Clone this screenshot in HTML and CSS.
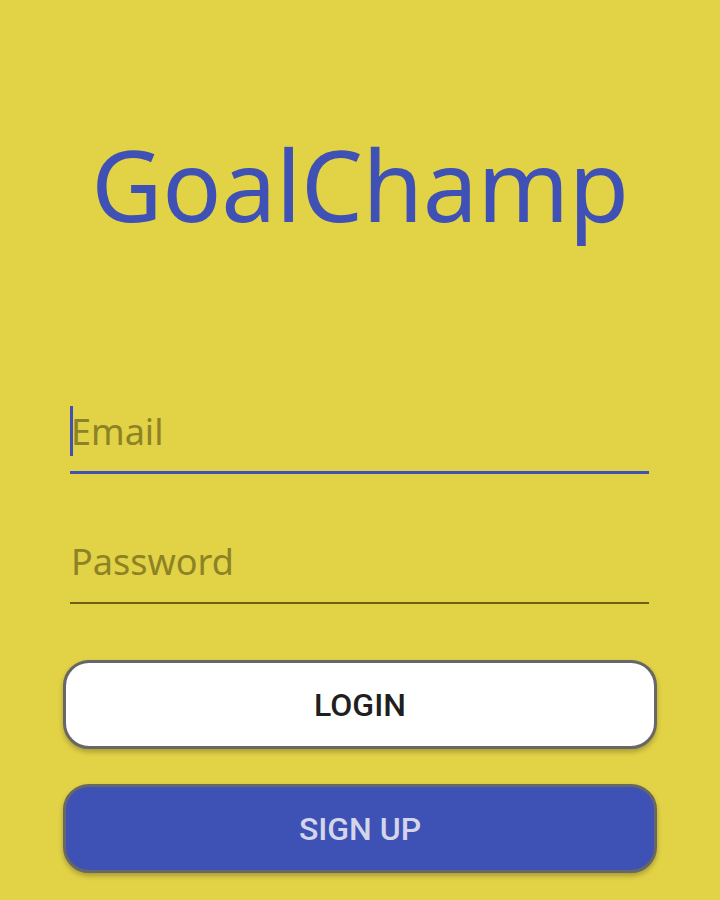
FILE: index.html
```html
<!DOCTYPE html>
<html>
<head>
<meta charset="utf-8">
<link rel="stylesheet" href="styles.css">
</head>
<body>
<main class="screen">
  <h1 class="title">GoalChamp</h1>
  <form class="form">
    <div class="field field-active">
      <span class="cursor"></span>
      <span class="placeholder">Email</span>
    </div>
    <div class="field">
      <span class="placeholder">Password</span>
    </div>
    <button type="button" class="btn btn-login">LOGIN</button>
    <button type="button" class="btn btn-signup">SIGN UP</button>
  </form>
</main>
</body>
</html>
```

FILE: styles.css
```css
html, body {
  margin: 0;
  padding: 0;
  background: #e2d246;
}
.screen {
  width: 720px;
  height: 900px;
  box-sizing: border-box;
  padding: 0 63px;
  display: flex;
  flex-direction: column;
  overflow: hidden;
}
.title {
  margin: 124px 0 0;
  font-family: "Noto Sans", sans-serif;
  font-weight: 400;
  font-size: 98px;
  line-height: 120px;
  color: #3f51b5;
  text-align: center;
  letter-spacing: -0.3px;
}
.form {
  display: flex;
  flex-direction: column;
  margin-top: 162px;
}
.field {
  margin: 0 8px 0 7px;
  height: 68px;
  padding-top: 6px;
  display: flex;
  align-items: flex-start;
  border-bottom: 2px solid #6e5f14;
  position: relative;
  box-sizing: border-box;
}
.field + .field {
  margin-top: 62px;
}
.field-active {
  border-bottom: 3px solid #3f51b5;
}
.cursor {
  position: absolute;
  left: 0;
  top: 0;
  width: 3px;
  height: 50px;
  background: #3f51b5;
}
.placeholder {
  font-family: "Noto Sans", sans-serif;
  font-size: 36px;
  line-height: 40px;
  color: #8d8226;
  padding-left: 1px;
}
.btn {
  height: 89px;
  border-radius: 26px;
  border: 3px solid #676767;
  font-family: Roboto, sans-serif;
  font-weight: 500;
  font-size: 32px;
  box-shadow: 0 3px 5px rgba(0, 0, 0, 0.25);
  padding: 0;
}
.btn-login {
  margin-top: 56px;
  background: #ffffff;
  color: #1f1f1f;
}
.btn-signup {
  margin-top: 35px;
  background: #3e51b5;
  color: #d3d6ea;
}
```
